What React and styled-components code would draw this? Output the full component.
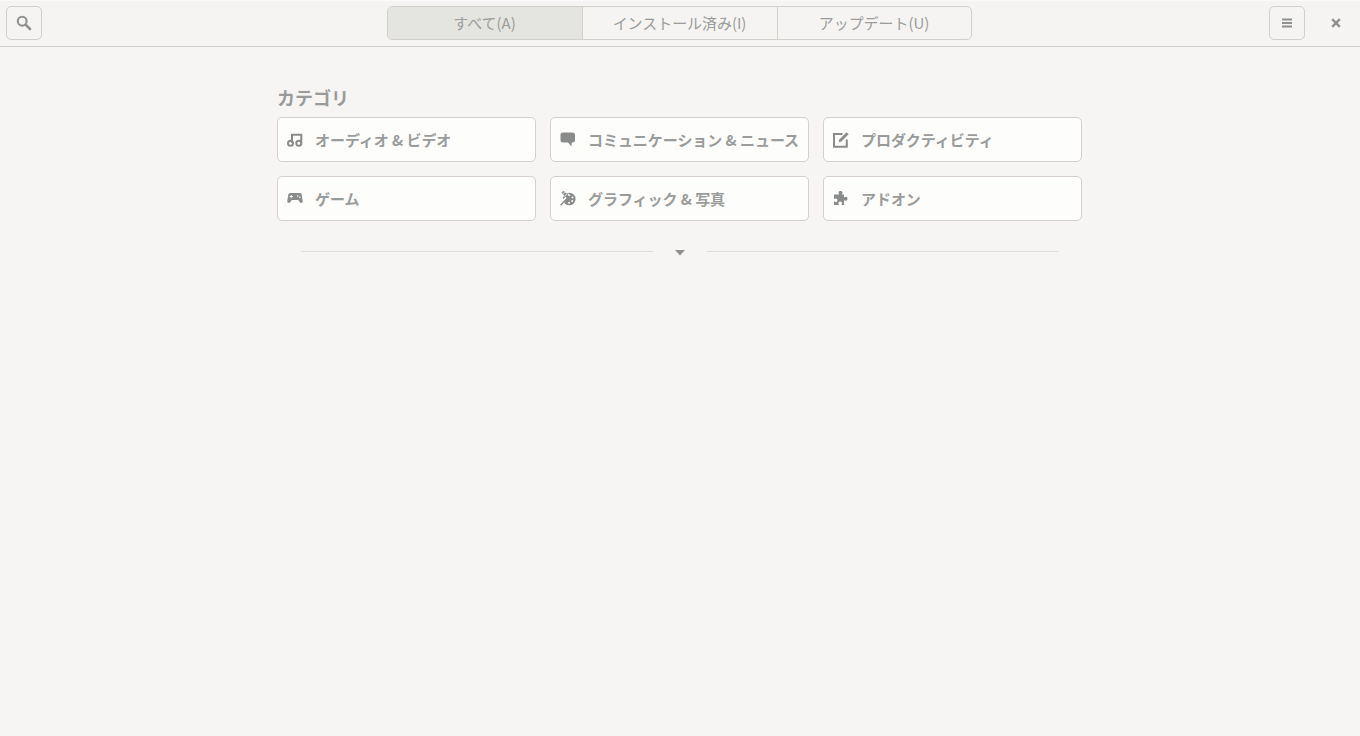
import React from "react"
import styled, { createGlobalStyle } from "styled-components"

const Global = createGlobalStyle`
  html, body {
    margin: 0;
    height: 100%;
    background: #f6f5f3;
    overflow: hidden;
  }
  body {
    font-family: "Noto Sans CJK JP", "Noto Sans", sans-serif;
  }
  * {
    box-sizing: border-box;
  }
`

const Page = styled.div`
  width: 1360px;
  height: 736px;
  background: #f6f5f3;
`

const Header = styled.header`
  display: grid;
  grid-template-columns: 1fr auto 1fr;
  align-items: center;
  height: 47px;
  padding: 0 6px 1px 6px;
  border-top: 1px solid #fbfafa;
  border-bottom: 1px solid #d3cfcb;
  background: #f5f4f2;
`

const Side = styled.div`
  display: flex;
  align-items: center;
  justify-content: ${(p) => (p.$end ? "flex-end" : "flex-start")};
`

const IconButton = styled.div`
  display: flex;
  align-items: center;
  justify-content: center;
  width: 36px;
  height: 34px;
  border: 1px solid #d3cfcb;
  border-radius: 5px;
  color: #8f9190;
`

const CloseButton = styled.div`
  display: flex;
  align-items: center;
  justify-content: center;
  width: 36px;
  height: 34px;
  margin-left: 13px;
  color: #8f9190;
`

const Tabs = styled.nav`
  display: grid;
  grid-template-columns: 194px 195px 194px;
  margin-left: -1px;
  height: 34px;
  width: 585px;
  border: 1px solid #d3cfcb;
  border-radius: 5px;
  overflow: hidden;
`

const Tab = styled.div`
  display: flex;
  align-items: center;
  justify-content: center;
  padding: 0 1px 2px 0;
  font-size: 15px;
  letter-spacing: -0.05px;
  color: #9a9d9c;
  background: ${(p) => (p.$active ? "#e4e4e0" : "transparent")};
  & + & {
    border-left: 1px solid #d3cfcb;
  }
`

const Main = styled.main`
  width: 805px;
  margin-left: 277px;
  padding-top: 36px;
`

const Title = styled.h2`
  margin: 0 0 6px 0;
  height: 28px;
  font-size: 18px;
  line-height: 28px;
  font-weight: 700;
  color: #999b9a;
`

const Grid = styled.div`
  display: grid;
  grid-template-columns: repeat(3, 259px);
  grid-auto-rows: 45px;
  gap: 14px;
`

const Card = styled.div`
  display: flex;
  align-items: center;
  padding-left: 9px;
  border: 1px solid #d5d0cb;
  border-radius: 5px;
  background: #fdfdfc;
  color: #8a8c8b;
`

const CardIcon = styled.span`
  display: flex;
  width: 18px;
  height: 16px;
`

const CardLabel = styled.span`
  margin-left: 10px;
  font-size: 15px;
  font-weight: 700;
  letter-spacing: -0.05px;
  white-space: nowrap;
  color: #9a9c9b;
`

const More = styled.div`
  display: flex;
  align-items: center;
  width: 757px;
  margin: 23px 0 0 24px;
  height: 14px;
`

const Rule = styled.div`
  flex: 1;
  height: 1px;
  background: #deddd9;
`

const Arrow = styled.div`
  display: flex;
  justify-content: center;
  width: 54px;
  margin-top: 3px;
  color: #8f9190;
`

const SearchIcon = () => (
  <svg width="16" height="16" viewBox="0 0 16 16" fill="none">
    <circle cx="6.2" cy="6.2" r="4.4" stroke="currentColor" strokeWidth="2.1" />
    <path d="M9.8 9.8l4.2 4.2" stroke="currentColor" strokeWidth="2.6" strokeLinecap="round" />
  </svg>
)

const MenuIcon = () => (
  <svg width="12" height="12" viewBox="0 0 12 12" fill="currentColor">
    <rect x="1" y="1.5" width="10" height="2" />
    <rect x="1" y="5" width="10" height="2" />
    <rect x="1" y="8.5" width="10" height="2" />
  </svg>
)

const CloseIcon = () => (
  <svg width="10" height="10" viewBox="0 0 10 10" fill="none">
    <path d="M1.200 1.200l7.600 7.600M8.800 1.200l-7.600 7.600" stroke="currentColor" strokeWidth="2.400" />
  </svg>
)

const MusicIcon = () => (
  <svg width="16" height="16" viewBox="0 0 16 16" fill="none" stroke="currentColor" strokeWidth="2">
    <circle cx="3.500" cy="11.300" r="2.500" />
    <circle cx="11.800" cy="11.300" r="2.500" />
    <path d="M5 11V2.800h9.300V11" />
  </svg>
)

const ChatIcon = () => (
  <svg width="16" height="16" viewBox="0 0 16 16" fill="currentColor">
    <path d="M3 .5h9.500A2.500 2.500 0 0 1 15 3v5a2.500 2.500 0 0 1-2.500 2.500h-.7l-.3 4-3.500-4H3A2.500 2.500 0 0 1 .5 8V3A2.500 2.500 0 0 1 3 .5z" />
  </svg>
)

const EditIcon = () => (
  <svg width="16" height="16" viewBox="0 0 16 16" fill="none">
    <path d="M9.500 2H1v12.800h12.800V7.500" stroke="currentColor" strokeWidth="2" />
    <path d="M13.600.2l2 2-7.300 7.300-2.700.700.700-2.700z" fill="currentColor" />
  </svg>
)

const GameIcon = () => (
  <svg width="16" height="16" viewBox="0 0 16 16" fill="currentColor">
    <path
      fillRule="evenodd"
      d="M3.400 2h9.200c1.100 0 1.800.6 2.100 1.600l1 6.300c.2 1.200-.6 1.900-1.500 1.900-.7 0-1.200-.4-1.600-.9L11.300 9H4.700L3.400 10.900c-.4.500-.9.900-1.600.9-.9 0-1.700-.7-1.500-1.900l1-6.300C1.600 2.600 2.300 2 3.400 2zM3.700 4v1.100H2.600v1h1.100v1.100h1V6.100h1.100v-1H4.700V4zM10.800 4.200a.8.800 0 1 0 0 1.600.8.800 0 0 0 0-1.600zM12.800 5.500a.8.800 0 1 0 0 1.600.8.800 0 0 0 0-1.600z"
    />
  </svg>
)

const PaletteIcon = () => (
  <svg width="16" height="16" viewBox="0 0 16 16" fill="none">
    <circle cx="9.300" cy="8" r="6.300" fill="currentColor" />
    <path d="M-1 14.500L9.500 3.500" stroke="#fdfdfc" strokeWidth="2.600" />
    <path d="M.5 14.300L9.500 5" stroke="currentColor" strokeWidth="1.400" />
    <path d="M2.500.8l5.500 5.500" stroke="currentColor" strokeWidth="3" />
    <path d="M2 3.800L5 .8M4 5.800L7 2.800" stroke="#fdfdfc" strokeWidth=".8" />
    <circle cx="12.500" cy="6.500" r="1" fill="#fdfdfc" />
    <circle cx="12.200" cy="10" r="1" fill="#fdfdfc" />
    <circle cx="9" cy="11.700" r="1" fill="#fdfdfc" />
  </svg>
)

const PuzzleIcon = () => (
  <svg width="16" height="16" viewBox="0 0 16 16" fill="currentColor">
    <path d="M4 3.500h2.300C5.700 2.700 5.500 2.200 5.500 1.700 5.500.7 6.400 0 7.500 0s2 .7 2 1.700c0 .5-.2 1-.8 1.800H11v3c.8-.6 1.300-.8 1.800-.8 1 0 1.700.9 1.700 2s-.7 2-1.700 2c-.5 0-1-.2-1.800-.8V14H8.300c.5-.7.700-1.200.7-1.700 0-1-.8-1.800-1.800-1.800s-1.800.8-1.800 1.800c0 .5.200 1 .7 1.700H1v-3.700c.7.500 1.200.7 1.700.7 1 0 1.800-.8 1.800-1.800S3.700 7.400 2.700 7.400c-.5 0-1 .2-1.700.7V3.500z" />
  </svg>
)

const categories = [
  { label: "オーディオ & ビデオ", icon: <MusicIcon /> },
  { label: "コミュニケーション & ニュース", icon: <ChatIcon /> },
  { label: "プロダクティビティ", icon: <EditIcon /> },
  { label: "ゲーム", icon: <GameIcon /> },
  { label: "グラフィック & 写真", icon: <PaletteIcon /> },
  { label: "アドオン", icon: <PuzzleIcon /> },
]

const App = () => {
  return (
    <Page>
      <Global />
      <Header>
        <Side>
          <IconButton>
            <SearchIcon />
          </IconButton>
        </Side>
        <Tabs>
          <Tab $active>すべて(A)</Tab>
          <Tab>インストール済み(I)</Tab>
          <Tab>アップデート(U)</Tab>
        </Tabs>
        <Side $end>
          <IconButton>
            <MenuIcon />
          </IconButton>
          <CloseButton>
            <CloseIcon />
          </CloseButton>
        </Side>
      </Header>
      <Main>
        <Title>カテゴリ</Title>
        <Grid>
          {categories.map((c) => (
            <Card key={c.label}>
              <CardIcon>{c.icon}</CardIcon>
              <CardLabel>{c.label}</CardLabel>
            </Card>
          ))}
        </Grid>
        <More>
          <Rule />
          <Arrow>
            <svg width="10" height="6" viewBox="0 0 10 6" fill="currentColor">
              <path d="M0 0h10L5 5.500z" />
            </svg>
          </Arrow>
          <Rule />
        </More>
      </Main>
    </Page>
  )
}

export default App
